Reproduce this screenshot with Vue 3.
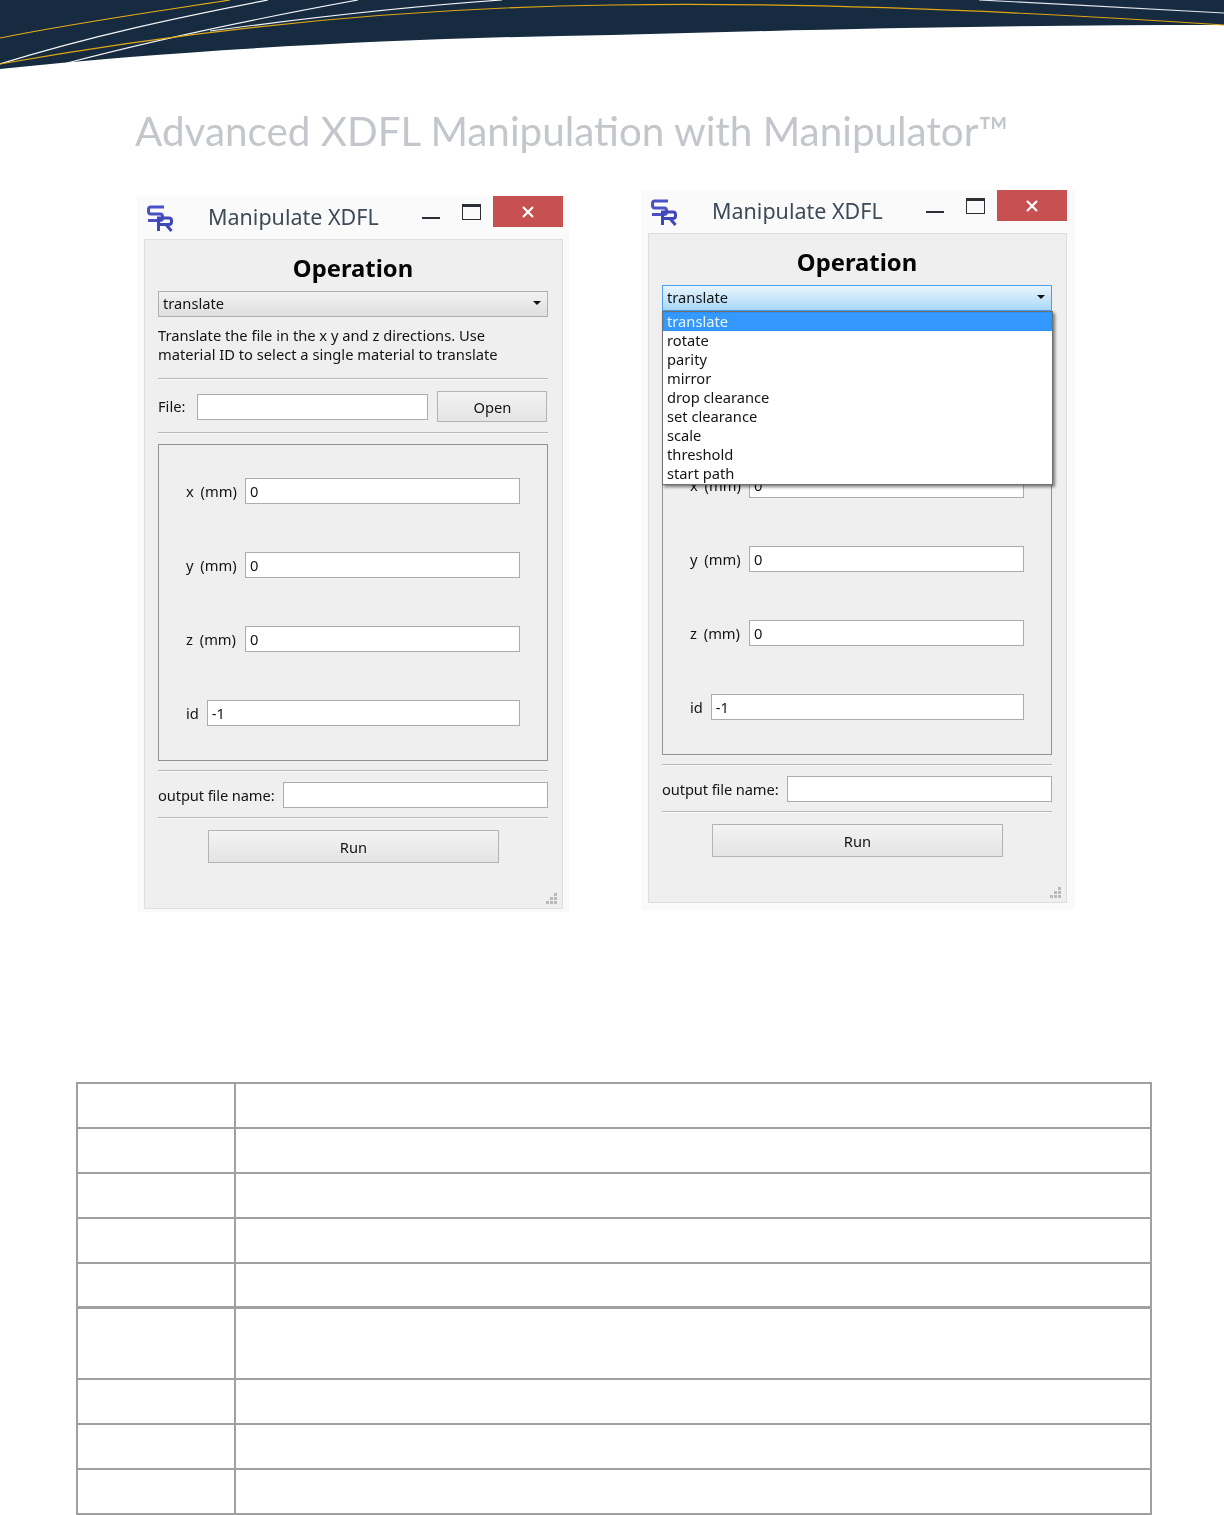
<script setup>
const fields = [
  { label: 'x (mm)', value: '0' },
  { label: 'y (mm)', value: '0' },
  { label: 'z (mm)', value: '0' },
  { label: 'id', value: '-1', short: true },
]
const options = ['translate', 'rotate', 'parity', 'mirror', 'drop clearance', 'set clearance', 'scale', 'threshold', 'start path']
const windows = [{ open: false }, { open: true }]
const rows = [1, 2, 3, 4, 5, 6, 7, 8, 9]
const dots = [[8, 0], [4, 4], [8, 4], [0, 8], [4, 8], [8, 8]]
</script>

<template>
  <div class="page">
    <svg class="banner" viewBox="0 0 1224 70" width="1224" height="70" aria-hidden="true">
      <path d="M0 69 C 180 50 400 38 612 35 C 800 30 1000 25 1224 25 L1224 0 L0 0 Z" fill="#172b40" />
      <g fill="none" stroke-width="1.2">
        <path d="M0 38 C 80 22 160 11 230 0" stroke="#e8ad14" />
        <path d="M0 64 C 90 36 180 17 268 0" stroke="#f4f6f8" />
        <path d="M67 63 C 170 36 270 16 358 0" stroke="#f4f6f8" />
        <path d="M210 31 C 300 19 400 7 502 0" stroke="#f4f6f8" />
        <path d="M0 64 C 180 32 380 8 612 5 C 800 2 1000 10 1224 25" stroke="#e0a714" />
        <path d="M979 0 C 1060 4 1150 9 1224 13" stroke="#dfe3e8" />
      </g>
    </svg>

    <h1 class="doc-title">Advanced XDFL Manipulation with Manipulator™</h1>

    <div class="shots">
      <section v-for="(w, i) in windows" :key="i" class="window" :class="{ 'window-open': w.open }">
        <header class="titlebar">
          <svg class="logo" viewBox="0 0 26 27" width="26" height="27" aria-hidden="true">
            <g fill="none" stroke="#4b50c4" stroke-width="3">
              <path d="M17 2 H4 Q1.5 2 1.5 4.5 V6.5 Q1.5 9 4 9 H13 Q15.5 9 15.5 11.5 V13 Q15.5 15.5 13 15.5 H1" />
              <path d="M11.5 26 V13 H22 Q24.5 13 24.5 15.5 V17 Q24.5 19.5 22 19.5 H12 M19 19.5 L24.5 26" stroke="#3f48b8" />
            </g>
          </svg>
          <span class="win-title">Manipulate XDFL</span>
          <span class="btn-min"></span>
          <span class="btn-max"></span>
          <span class="btn-close">
            <svg viewBox="0 0 12 12" width="12" height="12" aria-hidden="true">
              <path d="M1 1 L11 11 M11 1 L1 11" stroke="#fff" stroke-width="2.2" />
            </svg>
          </span>
        </header>

        <div class="panel">
          <h2 class="op-title">Operation</h2>
          <div class="combo" :class="{ 'combo-open': w.open }">
            <span>translate</span>
            <i class="caret"></i>
          </div>
          <ul v-if="w.open" class="dropdown">
            <li v-for="(o, n) in options" :key="o" :class="{ selected: n === 0 }">{{ o }}</li>
          </ul>

          <p class="desc">Translate the file in the x y and z directions. Use<br />material ID to select a single material to translate</p>
          <hr class="rule rule-a" />

          <div class="file-row">
            <label class="lbl">File:</label>
            <div class="field file-field"></div>
            <div class="push open-btn">Open</div>
          </div>
          <hr class="rule rule-b" />

          <div class="group">
            <div v-for="f in fields" :key="f.label" class="g-row">
              <label class="lbl" :class="{ 'lbl-wide': !f.short }">{{ f.label }}</label>
              <div class="field grow">{{ f.value }}</div>
            </div>
          </div>
          <hr class="rule rule-c" />

          <div class="out-row">
            <label class="lbl lbl-out">output file name:</label>
            <div class="field grow"></div>
          </div>
          <hr class="rule rule-d" />

          <div class="push run-btn">Run</div>

          <svg class="grip" viewBox="0 0 13 13" width="13" height="13" aria-hidden="true">
            <rect v-for="d in dots" :key="d.join()" :x="d[0] + 1" :y="d[1] + 1" width="3" height="3" fill="#b9b9b9" />
          </svg>
        </div>
      </section>
    </div>

    <table class="sheet">
      <colgroup>
        <col class="c1" />
        <col />
      </colgroup>
      <tbody>
        <tr v-for="r in rows" :key="r" :class="'r' + r">
          <td></td>
          <td></td>
        </tr>
      </tbody>
    </table>
  </div>
</template>

<style>
html, body { margin: 0; background: #fff; }
</style>

<style scoped>
.page {
  width: 1224px;
  height: 1515px;
  overflow: hidden;
  background: #fff;
  font-family: "Noto Sans", "Liberation Sans", sans-serif;
}
.banner { display: block; }
.doc-title {
  margin: 0 0 0 135px;
  height: 120px;
  padding-top: 35px;
  box-sizing: border-box;
  font-family: Lato, "Open Sans", sans-serif;
  font-weight: 400;
  font-size: 40.4px;
  line-height: 52px;
  color: #c3c7cb;
  white-space: nowrap;
  filter: blur(0.4px);
}
.shots {
  display: flex;
  align-items: flex-start;
  gap: 72px;
  padding-left: 137px;
}
.window {
  width: 432px;
  margin-top: 6px;
  padding: 0 6px 3px 7px;
  box-sizing: border-box;
  background: #fafafa;
  filter: blur(0.25px);
}
.window-open {
  width: 434px;
  margin-top: 0;
  padding: 0 8px 7px 7px;
}
.titlebar {
  height: 43px;
  display: flex;
  align-items: flex-start;
  position: relative;
}
.logo { margin: 9px 0 0 3px; flex: none; }
.win-title {
  margin: 6px 0 0 35px;
  width: 215px;
  font-size: 21.5px;
  line-height: 30px;
  color: #3d4a58;
  white-space: nowrap;
}
.btn-min {
  width: 18px;
  height: 2px;
  margin: 21px 0 0 0;
  background: #2b2f36;
  flex: none;
}
.btn-max {
  width: 19px;
  height: 16px;
  margin: 8px 0 0 22px;
  box-sizing: border-box;
  border: 1.5px solid #2b2f36;
  border-top-width: 3px;
  flex: none;
}
.btn-close {
  width: 70px;
  height: 31px;
  margin-left: 12px;
  background: #c75050;
  display: flex;
  align-items: center;
  justify-content: center;
  flex: none;
}
.panel {
  position: relative;
  height: 670px;
  box-sizing: border-box;
  padding: 0 14px 0 13px;
  background: #efefef;
  border: 1px solid #dedede;
  color: #141414;
  font-size: 14.7px;
  line-height: 19px;
}
.op-title {
  margin: 0;
  padding-top: 12px;
  height: 51px;
  box-sizing: border-box;
  font-size: 23.8px;
  line-height: 32px;
  font-weight: 700;
  color: #050505;
  text-align: center;
}
.combo {
  height: 26px;
  box-sizing: border-box;
  border: 1px solid #aeb0b3;
  background: linear-gradient(#f2f2f2, #dfdfdf);
  padding: 0 4px 2px;
  display: flex;
  align-items: center;
  justify-content: space-between;
}
.combo-open {
  border-color: #4b9fee;
  background: linear-gradient(#e9f5fd, #a9d8f8);
}
.caret {
  width: 0;
  height: 0;
  margin-right: 2px;
  border: 4px solid transparent;
  border-top: 4px solid #111;
  border-bottom: 0;
}
.dropdown {
  position: absolute;
  z-index: 2;
  top: 77px;
  left: 13px;
  width: 391px;
  box-sizing: border-box;
  height: 174px;
  margin: 0;
  padding: 0;
  list-style: none;
  background: #fff;
  border: 1px solid #6d7176;
  box-shadow: 2px 2px 3px rgba(0, 0, 0, 0.5);
}
.dropdown li {
  height: 19px;
  padding-left: 4px;
  line-height: 18px;
}
.dropdown .selected {
  background: #3399ff;
  color: #eaf4ff;
  outline: 1px dotted #a0703a;
  outline-offset: -1px;
}
.desc {
  margin: 9px 0 0;
  height: 38px;
  white-space: nowrap;
}
.rule {
  margin: 0;
  height: 0;
  border: 0;
  border-top: 1px solid #b8b8b8;
  border-bottom: 1px solid #fafafa;
}
.rule-a { margin-top: 14px; }
.rule-b { margin-top: 10px; }
.rule-c { margin-top: 9px; }
.rule-d { margin-top: 9px; }
.lbl { white-space: nowrap; flex: none; }
.lbl-wide { width: 51px; word-spacing: 3px; }
.lbl-out { letter-spacing: -0.12px; }
.field {
  height: 26px;
  box-sizing: border-box;
  border: 1px solid #acacac;
  background: #fff;
  padding: 0 4px;
  line-height: 24px;
}
.grow { flex: 1; }
.file-row {
  display: flex;
  align-items: center;
  height: 31px;
  margin-top: 11px;
}
.file-field { width: 231px; margin-left: 12px; flex: none; }
.push {
  box-sizing: border-box;
  border: 1px solid #b3b3b3;
  background: linear-gradient(#f3f3f3, #e4e4e4);
  text-align: center;
}
.open-btn {
  width: 110px;
  height: 31px;
  line-height: 31px;
  margin-left: 9px;
}
.group {
  margin-top: 10px;
  height: 317px;
  box-sizing: border-box;
  border: 1px solid #8e939a;
  padding: 33px 27px 0;
  display: flex;
  flex-direction: column;
  gap: 48px;
}
.g-row {
  display: flex;
  align-items: center;
  gap: 8px;
}
.out-row {
  display: flex;
  align-items: center;
  gap: 9px;
  margin-top: 10px;
}
.run-btn {
  width: 291px;
  height: 33px;
  line-height: 33px;
  margin: 11px 0 0 50px;
}
.grip {
  position: absolute;
  right: 4px;
  bottom: 3px;
}
.sheet {
  margin: 170px 0 0 76px;
  width: 1076px;
  border-collapse: collapse;
  table-layout: fixed;
}
.sheet td {
  padding: 0;
  border: 2px solid #a0a0a0;
  height: 45px;
  box-sizing: border-box;
}
.c1 { width: 158px; }
.r5 td { height: 44px; }
.r6 td { height: 72px; border-top-width: 3px; }
</style>
